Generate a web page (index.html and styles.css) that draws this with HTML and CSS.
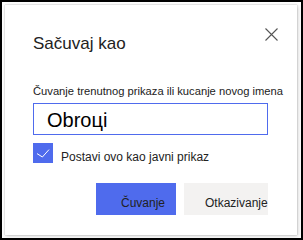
FILE: index.html
```html
<!DOCTYPE html>
<html lang="sr">
<head>
    <meta charset="UTF-8">
    <meta name="viewport" content="width=device-width, initial-scale=1.0">
    <title>Sačuvaj kao</title>
    <link rel="stylesheet" href="styles.css">
</head>
<body>
    <div class="frame">
        <!-- dijalog -->
        <div class="dialog">
            <div class="dialog-header">
                <h1 class="dialog-title">Sačuvaj kao</h1>
                <button class="close-btn" aria-label="Zatvori">
                    <svg width="13" height="13" viewBox="0 0 13 13">
                        <path d="M0.5 0.5 L12.5 12.5 M12.5 0.5 L0.5 12.5" stroke="#555" stroke-width="1.1" fill="none"/>
                    </svg>
                </button>
            </div>

            <label class="field-label" for="view-name">Čuvanje trenutnog prikaza ili kucanje novog imena</label>
            <input id="view-name" class="name-input" type="text" value="Obroці">

            <label class="check-row">
                <span class="check-box">
                    <svg width="20" height="20" viewBox="0 0 20 20">
                        <path d="M4 10.6 L9.4 14 L16 6.6" stroke="#fff" stroke-width="1" fill="none"/>
                    </svg>
                </span>
                <span class="check-text">Postavi ovo kao javni prikaz</span>
            </label>

            <div class="dialog-actions">
                <button class="btn btn-primary">Čuvanje</button>
                <button class="btn btn-default">Otkazivanje</button>
            </div>
        </div>
    </div>
</body>
</html>
```

FILE: styles.css
```css
/* base */
* {
    margin: 0;
    padding: 0;
    box-sizing: border-box;
    font-family: "Liberation Sans", Arial, sans-serif;
}

body {
    background: #fff;
}

.frame {
    width: 303px;
    height: 240px;
    border: 2px solid #000;
    padding: 3px 4px 3px 3px;
}

/* dialog */
.dialog {
    height: 230px;
    background: #fff;
    box-shadow: 0 0 1px rgba(0, 0, 0, 0.35), 1px 1px 4px rgba(0, 0, 0, 0.2);
    padding: 0 29px 0 28px;
    color: #222;
}

.dialog-header {
    display: flex;
    justify-content: space-between;
    align-items: flex-start;
}

.dialog-title {
    font-size: 17px;
    font-weight: normal;
    line-height: 22px;
    margin-top: 27.5px;
}

.close-btn {
    width: 13px;
    height: 13px;
    margin-top: 23px;
    margin-right: -10px;
    border: none;
    background: none;
    display: flex;
}

.field-label {
    display: block;
    font-size: 11.2px;
    line-height: 14px;
    margin-top: 29px;
    white-space: nowrap;
}

.name-input {
    display: block;
    width: 100%;
    height: 32px;
    margin-top: 5.5px;
    border: 1px solid #4f6bed;
    padding: 2px 13px 0;
    font-size: 20px;
    color: #000;
    outline: none;
}

/* checkbox */
.check-row {
    display: flex;
    gap: 8px;
    margin-top: 8px;
}

.check-box {
    width: 20px;
    height: 20px;
    flex: none;
    background: #4f6bed;
    display: flex;
}

.check-text {
    font-size: 12px;
    line-height: 14px;
    padding-top: 6.5px;
}

/* buttons */
.dialog-actions {
    display: flex;
    justify-content: flex-end;
    gap: 8px;
    margin-top: 19.5px;
}

.btn {
    height: 32px;
    border: none;
    font-size: 12px;
    line-height: 14px;
    color: #222;
    text-align: left;
    padding-top: 8px;
}

.btn-primary {
    width: 80px;
    padding-left: 25px;
    background: #4f6bed;
}

.btn-default {
    width: 84px;
    padding-left: 21px;
    background: #f3f2f1;
}
```
